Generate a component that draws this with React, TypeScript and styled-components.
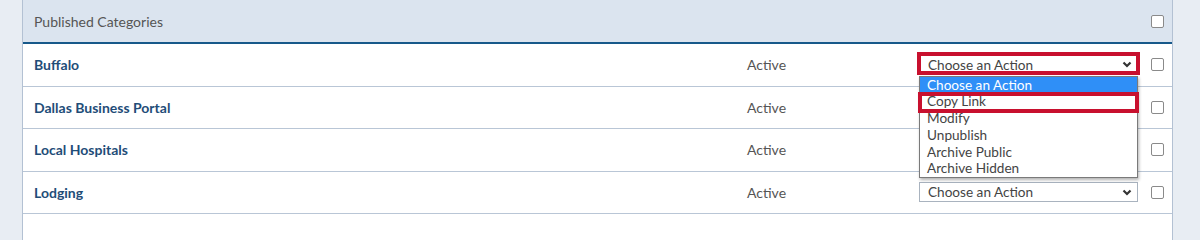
import styled, { createGlobalStyle } from 'styled-components';

const GlobalStyle = createGlobalStyle`
  html, body {
    margin: 0;
    padding: 0;
    background: #e8edf3;
    font-family: Lato, "Noto Sans", sans-serif;
  }
`;

const Page = styled.div`
  padding-left: 22px;
  width: 1151px;
`;

const Table = styled.div`
  background: #fff;
  border-left: 1px solid #b3c1d3;
  border-right: 1px solid #b3c1d3;
`;

const Header = styled.div`
  display: grid;
  grid-template-columns: 1fr 34px;
  align-items: center;
  height: 42px;
  background: #dbe4ef;
  border-bottom: 2px solid #17598a;
`;

const HeaderTitle = styled.div`
  padding-left: 11px;
  font-size: 14px;
  color: #555;
`;

const Row = styled.div`
  display: grid;
  grid-template-columns: 724px 172px 219px 34px;
  align-items: center;
  height: 41.5px;
  border-bottom: 1px solid #b9c6d6;
`;

const Name = styled.div`
  padding-left: 11px;
  font-size: 14px;
  font-weight: 700;
  color: #1f4d78;
`;

const Status = styled.div`
  font-size: 14px;
  color: #555;
`;

const SelectCell = styled.div`
  position: relative;
`;

const Select = styled.div`
  display: flex;
  align-items: center;
  justify-content: space-between;
  box-sizing: border-box;
  height: 20px;
  padding: 0 5px 0 8px;
  border: 1px solid #a9b3bf;
  background: #fff;
  font-size: 13.6px;
  color: #444;
`;

const Highlight = styled.div<{ $top: number; $bottom: number }>`
  position: absolute;
  left: -2px;
  right: -2px;
  top: ${p => p.$top}px;
  bottom: ${p => p.$bottom}px;
  border: 4px solid #c8102e;
  pointer-events: none;
  z-index: 3;
`;

const OptionList = styled.div`
  position: absolute;
  top: 21px;
  left: 0;
  width: 219px;
  box-sizing: border-box;
  background: #fff;
  border: 1px solid #7a7a7a;
  box-shadow: 1px 2px 3px rgba(0, 0, 0, 0.3);
  z-index: 2;
`;

const Option = styled.div<{ $selected?: boolean }>`
  position: relative;
  height: 16.7px;
  line-height: 16.7px;
  padding-left: 7px;
  font-size: 13.6px;
  color: ${p => (p.$selected ? '#fff' : '#444')};
  background: ${p => (p.$selected ? '#2f8ff7' : 'transparent')};
`;

const CheckCell = styled.div`
  display: flex;
  padding-left: 13px;
`;

const Checkbox = styled.span`
  display: block;
  width: 11px;
  height: 11px;
  border: 1px solid #8a8a8a;
  border-radius: 2px;
  background: #fff;
`;

const Chevron = () => (
  <svg width="10" height="7" viewBox="0 0 10 7">
    <path d="M1.5 1.5 L5 5 L8.5 1.5" fill="none" stroke="#333" strokeWidth="2.2" />
  </svg>
);

const actions = ['Choose an Action', 'Copy Link', 'Modify', 'Unpublish', 'Archive Public', 'Archive Hidden'];
const categories = ['Buffalo', 'Dallas Business Portal', 'Local Hospitals', 'Lodging'];

const App = () => {
  return (
    <Page>
      <GlobalStyle />
      <Table>
        <Header>
          <HeaderTitle>Published Categories</HeaderTitle>
          <CheckCell>
            <Checkbox />
          </CheckCell>
        </Header>
        {categories.map((name, i) => (
          <Row key={name}>
            <Name>{name}</Name>
            <Status>Active</Status>
            <SelectCell>
              {i === 0 || i === 3 ? (
                <Select>
                  <span>Choose an Action</span>
                  <Chevron />
                </Select>
              ) : null}
              {i === 0 && (
                <>
                  <Highlight $top={-3} $bottom={0} />
                  <OptionList>
                    {actions.map((a, j) => (
                      <Option key={a} $selected={j === 0}>
                        {a}
                        {j === 1 && <Highlight $top={-1} $bottom={-3} />}
                      </Option>
                    ))}
                  </OptionList>
                </>
              )}
            </SelectCell>
            <CheckCell>
              <Checkbox />
            </CheckCell>
          </Row>
        ))}
        <Row />
      </Table>
    </Page>
  );
};

export default App;
